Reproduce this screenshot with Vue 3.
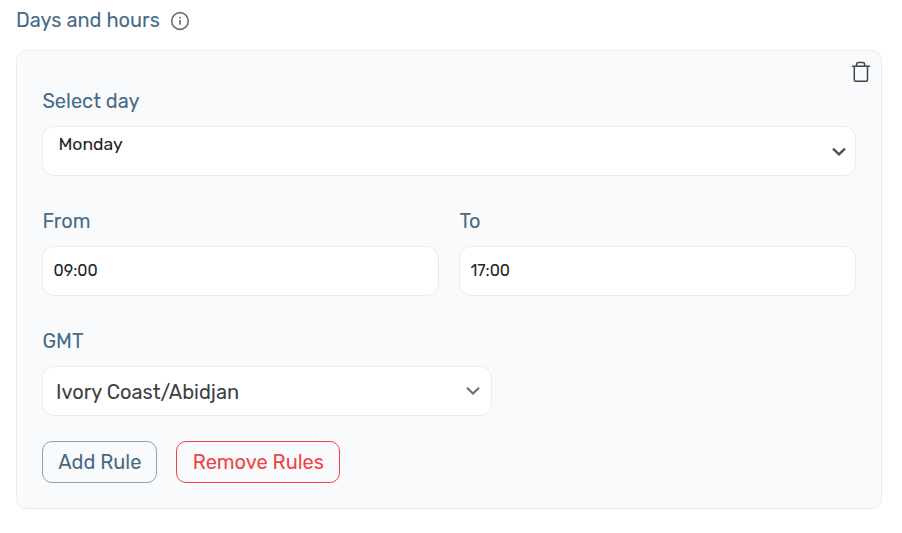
<template>
  <section class="schedule">
    <div class="schedule-header">
      <h2>Days and hours</h2>
      <svg class="info-icon" viewBox="0 0 20 20" width="20" height="20">
        <circle cx="10" cy="10" r="8.3" fill="none" stroke="#71757a" stroke-width="1.7" />
        <rect x="9.1" y="5.8" width="1.8" height="1.7" fill="#71757a" />
        <rect x="9.1" y="9" width="1.8" height="4.6" fill="#71757a" />
      </svg>
    </div>

    <div class="rule-card">
      <!-- Delete rule -->
      <button class="delete-btn" aria-label="Delete rule">
        <svg viewBox="0 0 20 22" width="20" height="22" fill="none" stroke="#3f444b" stroke-width="1.5">
          <path d="M0.9 5.2H18.9" />
          <path d="M5.6 5V3.2Q5.6 1.5 7.3 1.5H11.9Q13.6 1.5 13.6 3.2V5" />
          <path d="M3.3 5.2V19Q3.3 20.2 4.5 20.2H15.3Q16.5 20.2 16.5 19V5.2" />
        </svg>
      </button>

      <div class="field">
        <label for="day">Select day</label>
        <div class="select-box">
          <select id="day" v-model="rule.day" class="control day-select">
            <option v-for="day in days" :key="day" :value="day">{{ day }}</option>
          </select>
          <svg class="chevron" viewBox="0 0 16 10" width="16" height="10">
            <path d="M2 1.6L8 7.4L14 1.6" fill="none" stroke="#4c4c4c" stroke-width="2.2" />
          </svg>
        </div>
      </div>

      <div class="time-row">
        <div class="field">
          <label for="from">From</label>
          <input id="from" v-model="rule.from" type="text" class="control time-input" />
        </div>
        <div class="field">
          <label for="to">To</label>
          <input id="to" v-model="rule.to" type="text" class="control time-input" />
        </div>
      </div>

      <div class="field gmt-field">
        <label for="gmt">GMT</label>
        <div class="select-box">
          <select id="gmt" v-model="rule.zone" class="control gmt-select">
            <option v-for="zone in zones" :key="zone" :value="zone">{{ zone }}</option>
          </select>
          <svg class="chevron gmt-chevron" viewBox="0 0 16 10" width="16" height="10">
            <path d="M2 1.8L8 7.6L14 1.8" fill="none" stroke="#707070" stroke-width="2.1" />
          </svg>
        </div>
      </div>

      <div class="actions">
        <button class="btn add">Add Rule</button>
        <button class="btn remove">Remove Rules</button>
      </div>
    </div>
  </section>
</template>

<script setup>
import { reactive } from 'vue'

const days = ['Monday', 'Tuesday', 'Wednesday', 'Thursday', 'Friday', 'Saturday', 'Sunday']
const zones = ['Ivory Coast/Abidjan']

const rule = reactive({
  day: 'Monday',
  from: '09:00',
  to: '17:00',
  zone: 'Ivory Coast/Abidjan'
})
</script>

<style>
body {
  background: #fff;
}
</style>

<style scoped>
.schedule {
  padding: 8px 20px 0 16px;
  font-family: Rubik, Roboto, sans-serif;
  color: #476a86;
}

.schedule-header {
  display: flex;
  align-items: center;
  gap: 10px;
  height: 24px;
  margin-bottom: 18px;
}

h2,
label {
  margin: 0;
  font-size: 20px;
  font-weight: 400;
  line-height: 24px;
}

.info-icon {
  position: relative;
  top: 1px;
}

.rule-card {
  position: relative;
  box-sizing: border-box;
  height: 459px;
  padding: 38px 25px 25px;
  border: 1px solid #e8edf0;
  border-radius: 10px;
  background: #f9fafc;
}

.delete-btn {
  position: absolute;
  top: 10px;
  right: 10px;
  padding: 0;
  border: none;
  background: none;
  line-height: 0;
  cursor: pointer;
}

.field {
  flex: 1;
  margin-bottom: 33px;
}

label {
  display: block;
  margin-bottom: 13px;
  padding-left: 0.4px;
}

.field .control {
  display: block;
  box-sizing: border-box;
  width: 100%;
  height: 50px;
  margin: 0;
  border: 1px solid #e9ebed;
  border-radius: 12px;
  background: #fff;
  color: #212529;
  font-family: inherit;
  outline: none;
  appearance: none;
}

.time-row {
  display: flex;
  gap: 20px;
}

.select-box {
  position: relative;
}

.chevron {
  position: absolute;
  top: 21px;
  right: 9px;
  pointer-events: none;
}

.gmt-chevron {
  top: 20px;
  right: 11px;
}

/* Day sits above the middle of its box */
.field .day-select {
  padding: 0 40px 14px 15.4px;
  font-size: 17.6px;
}

.field .time-input {
  padding: 0 10.5px 2px;
  font-size: 16px;
}

.gmt-field {
  width: 450px;
  margin-bottom: 25px;
}

.field .gmt-select {
  padding: 2px 40px 0 13px;
  color: #3b4045;
  font-size: 20px;
}

.actions {
  display: flex;
  gap: 19px;
}

.btn {
  box-sizing: border-box;
  width: 115px;
  height: 42px;
  padding: 0 0 0 0.6px;
  border: 1px solid #8ea2b5;
  border-radius: 10px;
  background: transparent;
  color: #476a86;
  font-family: inherit;
  font-size: 20px;
  cursor: pointer;
}

.btn.remove {
  width: 164px;
  border-color: #f04444;
  color: #f04444;
}
</style>
